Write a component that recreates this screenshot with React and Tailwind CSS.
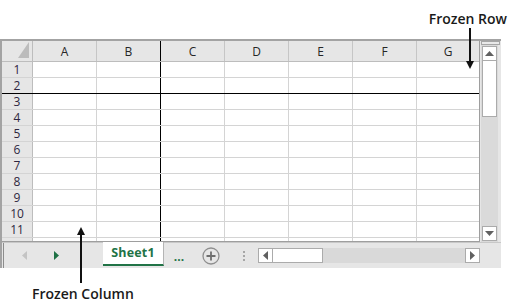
import React from 'react';

const cols = ['A', 'B', 'C', 'D', 'E', 'F', 'G'];
const rows = [1, 2, 3, 4, 5, 6, 7, 8, 9, 10, 11, 12];

// column widths, B carries the frozen pane line
const colClass = (c) => {
    if (c === 'G') return 'w-[62px]';
    if (c === 'B') return 'w-[64px] border-r border-black';
    return 'w-[64px] border-r border-[#d4d4d4]';
};

const headClass = (c) => {
    if (c === 'G') return 'w-[62px]';
    if (c === 'B') return 'w-[64px] border-r border-black';
    return 'w-[64px] border-r border-[#c6c6c6]';
};

function Grid() {
    return (
        <div className="w-[478px] h-[201px] bg-white border-r border-b border-[#9e9e9e] overflow-hidden flex flex-col">
            {/* Column headers */}
            <div className="flex h-[21px] shrink-0 bg-[#e6e6e6] border-b border-[#bdbdbd]">
                <div className="w-[31px] border-r border-[#bdbdbd] flex items-end justify-end pr-[3px] pb-[3px]">
                    <svg width="11" height="16" viewBox="0 0 11 16">
                        <polygon points="11,0 11,16 0,16" fill="#bcbcbc" />
                    </svg>
                </div>
                {cols.map((c) => (
                    <div key={c} className={`${headClass(c)} flex items-center justify-center pt-[2px] text-[12px] text-[#262626]`}>
                        {c}
                    </div>
                ))}
            </div>

            {/* Rows (12 is only partly visible, no label shown) */}
            {rows.map((r) => (
                <div
                    key={r}
                    className={`flex h-[16px] shrink-0 border-b ${r === 2 ? 'border-black' : 'border-[#d4d4d4]'}`}
                >
                    <div className="w-[31px] bg-[#e6e6e6] border-r border-[#bdbdbd] flex items-center justify-center text-[12px] text-[#2e2640]">
                        {r < 12 ? r : ''}
                    </div>
                    {cols.map((c) => (
                        <div key={c} className={colClass(c)} />
                    ))}
                </div>
            ))}
        </div>
    );
}

function VScroll() {
    return (
        <div className="w-[21px] h-[201px] flex flex-col">
            <div className="h-[4px] mx-[1px] border border-[#a6a6a6] bg-[#e9e9e9]" />
            <div className="flex-1 ml-[1px] mr-[3px] bg-[#dadada] flex flex-col px-[1px] pb-[1px]">
                <div className="h-[15px] mt-[1px] bg-white border border-[#ababab] flex items-center justify-center">
                    <svg width="9" height="5" viewBox="0 0 9 5"><polygon points="4.5,0 9,5 0,5" fill="#606060" /></svg>
                </div>
                <div className="h-[56px] bg-white border border-[#ababab] border-t-0" />
                <div className="flex-1" />
                <div className="h-[15px] bg-white border border-[#ababab] flex items-center justify-center">
                    <svg width="9" height="5" viewBox="0 0 9 5"><polygon points="0,0 9,0 4.5,5" fill="#606060" /></svg>
                </div>
            </div>
        </div>
    );
}

function TabBar() {
    return (
        <div className="h-[26px] flex items-stretch border-t border-[#c8c8c8]">
            {/* sheet navigation */}
            <div className="w-[100px] flex items-center ml-[1px] border-l border-[#8c8c8c]">
                <svg className="ml-[18px]" width="5" height="9" viewBox="0 0 5 9"><polygon points="5,0 5,9 0,4.5" fill="#c4c4c4" /></svg>
                <svg className="ml-[27px]" width="5" height="9" viewBox="0 0 5 9"><polygon points="0,0 5,4.5 0,9" fill="#1e7145" /></svg>
            </div>

            {/* active sheet tab */}
            <div className="w-[61px] -mt-[1px] mb-[2px] bg-white border-r border-[#b4b4b4] border-b-2 border-b-[#217346] flex items-center justify-center text-[12.5px] font-bold tracking-[0.2px] text-[#217346]">
                Sheet1
            </div>

            <div className="ml-[9px] w-[12px] flex items-center justify-center pt-[2px] text-[12px] font-bold text-[#217346] leading-none">
                ...
            </div>

            <div className="ml-[17px] flex items-center">
                <svg width="18" height="18" viewBox="0 0 18 18">
                    <circle cx="9" cy="9" r="8" fill="none" stroke="#8f8f8f" strokeWidth="1.3" />
                    <path d="M9 4.5V13.5M4.5 9H13.5" stroke="#6e6e6e" strokeWidth="1.8" />
                </svg>
            </div>

            <div className="ml-[23px] flex flex-col justify-center gap-[2px]">
                <div className="w-[2px] h-[2px] bg-[#a6a6a6]" />
                <div className="w-[2px] h-[2px] bg-[#a6a6a6]" />
                <div className="w-[2px] h-[2px] bg-[#a6a6a6]" />
            </div>

            {/* horizontal scroll */}
            <div className="ml-[13px] w-[222px] h-[15px] mt-[5px] bg-[#d9d9d9] flex">
                <div className="w-[15px] bg-white border border-[#ababab] flex items-center justify-center">
                    <svg width="5" height="9" viewBox="0 0 5 9"><polygon points="5,0 5,9 0,4.5" fill="#606060" /></svg>
                </div>
                <div className="w-[50px] bg-white border border-[#ababab] border-l-0" />
                <div className="flex-1" />
                <div className="w-[15px] bg-white border border-[#ababab] flex items-center justify-center">
                    <svg width="5" height="9" viewBox="0 0 5 9"><polygon points="0,0 5,4.5 0,9" fill="#606060" /></svg>
                </div>
            </div>
        </div>
    );
}

export default function App() {
    return (
        <div className="relative w-[511px] h-[306px] bg-white overflow-hidden" style={{ fontFamily: '"Open Sans", "Noto Sans", sans-serif' }}>
            {/* Frozen Row label */}
            <div className="h-[39px] flex justify-end pr-[4px] pt-[9px]">
                <span className="text-[14px] font-semibold text-[#1a1a1a] leading-[19px]">Frozen Row</span>
            </div>

            {/* Excel window */}
            <div className="w-[501px] h-[229px] border-t-2 border-l-2 border-[#a3a3a3] bg-[#e6e6e6] flex flex-col">
                <div className="flex">
                    <Grid />
                    <VScroll />
                </div>
                <TabBar />
            </div>

            {/* Frozen Column label */}
            <div className="pl-[32px] pt-[13px]">
                <span className="text-[14px] font-semibold text-[#1a1a1a] leading-[19px]">Frozen Column</span>
            </div>

            {/* annotation arrows */}
            <svg className="absolute left-0 top-0 pointer-events-none" width="511" height="306">
                <line x1="470" y1="28" x2="470" y2="62" stroke="#111" strokeWidth="2" />
                <polygon points="466,61 474,61 470,69" fill="#111" />
                <line x1="81" y1="283" x2="81" y2="234" stroke="#111" strokeWidth="2" />
                <polygon points="77,235 85,235 81,227" fill="#111" />
            </svg>
        </div>
    );
}
